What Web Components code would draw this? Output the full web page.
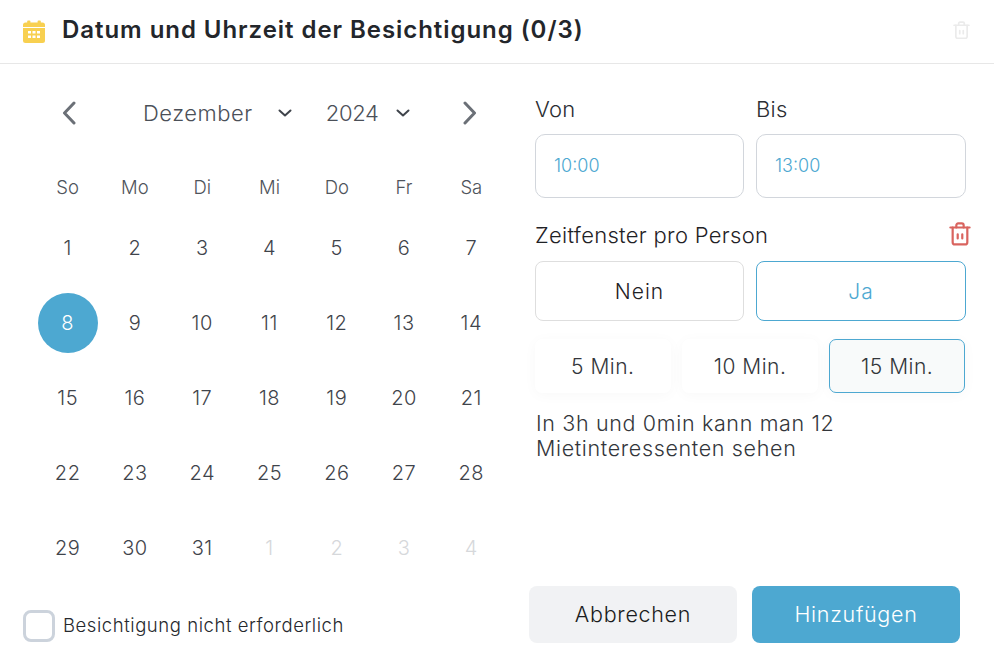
<!DOCTYPE html>
<html lang="de">
<head>
<meta charset="utf-8">
<title>Besichtigung</title>
<style>
  html, body { margin: 0; background: #fff; }
  body { font-family: "Inter", "Liberation Sans", sans-serif; }
</style>
</head>
<body>
<visit-dialog></visit-dialog>
<script>
const TRASH = `
  <svg viewBox="0 0 24 26" fill="none" stroke="currentColor" stroke-width="2.4" stroke-linecap="round" stroke-linejoin="round">
    <path d="M1.5 6h21"/>
    <path d="M8 6V3.5A2 2 0 0 1 10 1.5h4a2 2 0 0 1 2 2V6"/>
    <path d="M4 6v16a2.500 2.500 0 0 0 2.500 2.500h11A2.500 2.500 0 0 0 20 22V6"/>
    <path d="M9.500 13.500v4.500M14.500 13.500v4.500"/>
  </svg>`;

class DialogHeader extends HTMLElement {
  constructor() {
    super();
    this.attachShadow({ mode: 'open' });
  }

  connectedCallback() {
    this.shadowRoot.innerHTML = `
      <style>
        :host {
          display: flex;
          align-items: center;
          height: 63px;
          padding: 0 24px 0 23px;
          border-bottom: 1px solid #e7e7e7;
        }
        .cal { width: 22px; height: 23px; margin-right: 17px; display: block; }
        h1 {
          flex: 1;
          margin: -5px 0 0;
          font-size: 24px;
          font-weight: 600;
          letter-spacing: 0.95px;
          color: #23262b;
        }
        .trash { width: 17px; height: 21px; color: #ebebeb; display: block; }
      </style>
      <svg class="cal" viewBox="0 0 22 23">
        <path fill="#f8d050" d="M5 0.5h1.6a.8.8 0 0 1 .8.8V2.500h7.200V1.300a.8.8 0 0 1 .8-.8H17a.8.8 0 0 1 .8.8V2.500H19.500A2.500 2.500 0 0 1 22 5V7H0V5A2.500 2.500 0 0 1 2.500 2.500H4.200V1.300a.8.8 0 0 1 .8-.8Z"/>
        <path fill="#f8d050" d="M0 8H22V20.500A2.500 2.500 0 0 1 19.500 23H2.500A2.500 2.500 0 0 1 0 20.500Z"/>
        <g fill="#fff">
          <rect x="5" y="11" width="3" height="2.500"/><rect x="9.500" y="11" width="3" height="2.500"/><rect x="14" y="11" width="3" height="2.500"/>
          <rect x="5" y="15.500" width="3" height="2.500"/><rect x="9.500" y="15.500" width="3" height="2.500"/><rect x="14" y="15.500" width="3" height="2.500"/>
        </g>
      </svg>
      <h1><slot></slot></h1>
      <span class="trash">${TRASH}</span>
    `;
  }
}

class MonthCalendar extends HTMLElement {
  constructor() {
    super();
    this.attachShadow({ mode: 'open' });
  }

  connectedCallback() {
    const weekdays = ['So', 'Mo', 'Di', 'Mi', 'Do', 'Fr', 'Sa'];
    let cells = '';
    for (let day = 1; day <= 31; day++) {
      cells += `<div class="cell"><span class="${day === 8 ? 'day picked' : 'day'}">${day}</span></div>`;
    }
    for (let day = 1; day <= 4; day++) {
      cells += `<div class="cell"><span class="day muted">${day}</span></div>`;
    }

    this.shadowRoot.innerHTML = `
      <style>
        :host { display: block; width: 471px; font-weight: 300; color: #3f444b; }
        .nav {
          display: flex;
          align-items: center;
          height: 40px;
          margin-left: 28px;
          margin-bottom: 35px;
          color: #4b5058;
        }
        .arrow { width: 14px; height: 24px; display: block; color: #6b7077; }
        .month {
          margin-left: 67px;
          font-size: 22px;
          letter-spacing: 0.5px;
        }
        .year {
          margin-left: 34px;
          font-size: 22px;
          letter-spacing: -0.3px;
        }
        .chev { width: 14px; height: 8px; display: block; margin-left: 25px; color: #3f444b; }
        .chev.y { margin-left: 17px; }
        .arrow.next { margin-left: 53px; }
        .grid {
          display: grid;
          grid-template-columns: repeat(7, 1fr);
          grid-auto-rows: 75px;
          font-size: 20px;
          letter-spacing: 0.5px;
        }
        .head { grid-auto-rows: 37px; margin-bottom: 5px; font-size: 18.500px; letter-spacing: 0; color: #4f545b; }
        .head div { display: flex; align-items: center; justify-content: center; }
        .cell { display: flex; align-items: center; justify-content: center; }
        .day {
          width: 60px;
          height: 60px;
          border-radius: 50%;
          display: flex;
          align-items: center;
          justify-content: center;
        }
        .picked { background: #4da8d1; color: #fff; }
        .muted { color: #d6d8db; }
      </style>
      <div class="nav">
        <svg class="arrow" viewBox="0 0 14 24" fill="none" stroke="currentColor" stroke-width="3" stroke-linecap="round" stroke-linejoin="round"><path d="M12 2 2.500 12 12 22"/></svg>
        <span class="month">Dezember</span>
        <svg class="chev" viewBox="0 0 14 8" fill="none" stroke="currentColor" stroke-width="2" stroke-linecap="round" stroke-linejoin="round"><path d="M1.500 1.500 7 6.500l5.500-5"/></svg>
        <span class="year">2024</span>
        <svg class="chev y" viewBox="0 0 14 8" fill="none" stroke="currentColor" stroke-width="2" stroke-linecap="round" stroke-linejoin="round"><path d="M1.500 1.500 7 6.500l5.500-5"/></svg>
        <svg class="arrow next" viewBox="0 0 14 24" fill="none" stroke="currentColor" stroke-width="3" stroke-linecap="round" stroke-linejoin="round"><path d="M2 2l9.500 10L2 22"/></svg>
      </div>
      <div class="grid head">${weekdays.map((d) => `<div>${d}</div>`).join('')}</div>
      <div class="grid">${cells}</div>
    `;
  }
}

class TimeField extends HTMLElement {
  constructor() {
    super();
    this.attachShadow({ mode: 'open' });
  }

  connectedCallback() {
    this.shadowRoot.innerHTML = `
      <style>
        :host { display: block; }
        label { display: block; height: 38px; margin-top: -2px; font-size: 22px; font-weight: 300; color: #2b2e33; letter-spacing: 0.3px; }
        .box {
          box-sizing: border-box;
          height: 64px;
          border: 1px solid #d2d6dc;
          border-radius: 10px;
          padding: 0 0 2px 18px;
          display: flex;
          align-items: center;
          font-size: 18px;
          font-weight: 300;
          color: #4da8d1;
        }
      </style>
      <label>${this.getAttribute('label')}</label>
      <div class="box"><slot></slot></div>
    `;
  }
}

class ChoiceButton extends HTMLElement {
  constructor() {
    super();
    this.attachShadow({ mode: 'open' });
  }

  connectedCallback() {
    this.shadowRoot.innerHTML = `
      <style>
        :host {
          display: flex;
          box-sizing: border-box;
          align-items: center;
          justify-content: center;
          height: 60px;
          border: 1px solid #dedede;
          border-radius: 8px;
          font-size: 21px;
          font-weight: 300;
          letter-spacing: 1px;
          color: #1f2226;
        }
        :host([selected]) { border-color: #4da8d1; color: #4da8d1; }
      </style>
      <slot></slot>
    `;
  }
}

class SlotChip extends HTMLElement {
  constructor() {
    super();
    this.attachShadow({ mode: 'open' });
  }

  connectedCallback() {
    this.shadowRoot.innerHTML = `
      <style>
        :host {
          display: flex;
          flex: 1;
          box-sizing: border-box;
          align-items: center;
          justify-content: center;
          height: 54px;
          border: 1px solid transparent;
          border-radius: 7px;
          background: #fff;
          box-shadow: 0 2px 14px rgba(0, 0, 0, 0.03);
          font-size: 21px;
          font-weight: 300;
          letter-spacing: 0.5px;
          color: #33363b;
        }
        :host([selected]) { border-color: #4da8d1; background: #f8fafa; }
      </style>
      <slot></slot>
    `;
  }
}

class TimePanel extends HTMLElement {
  constructor() {
    super();
    this.attachShadow({ mode: 'open' });
  }

  connectedCallback() {
    this.shadowRoot.innerHTML = `
      <style>
        :host { display: block; width: 431px; padding-top: 5px; }
        .row { display: grid; grid-template-columns: 209px 1fr; gap: 12px; }
        .title {
          display: flex;
          align-items: center;
          justify-content: space-between;
          height: 27px;
          margin: 23px -5px 13px 0;
          font-size: 22px;
          font-weight: 300;
          letter-spacing: 0.3px;
          color: #1f2226;
        }
        .title span { width: 22px; height: 25px; color: #d9645f; display: block; }
        .chips { display: flex; margin-top: 18px; gap: 11.500px; width: 430px; }
        p {
          margin: 18px 0 0 1px;
          font-size: 21.500px;
          font-weight: 300;
          line-height: 25px;
          letter-spacing: 0.65px;
          color: #33363b;
        }
      </style>
      <div class="row">
        <time-field label="Von">10:00</time-field>
        <time-field label="Bis">13:00</time-field>
      </div>
      <div class="title">Zeitfenster pro Person <span>${TRASH}</span></div>
      <div class="row">
        <choice-button>Nein</choice-button>
        <choice-button selected>Ja</choice-button>
      </div>
      <div class="chips">
        <slot-chip>5 Min.</slot-chip>
        <slot-chip>10 Min.</slot-chip>
        <slot-chip selected>15 Min.</slot-chip>
      </div>
      <p>In 3h und 0min kann man 12<br>Mietinteressenten sehen</p>
    `;
  }
}

class DialogFooter extends HTMLElement {
  constructor() {
    super();
    this.attachShadow({ mode: 'open' });
  }

  connectedCallback() {
    this.shadowRoot.innerHTML = `
      <style>
        :host {
          display: flex;
          align-items: center;
          height: 57px;
          padding-left: 23px;
        }
        .check {
          box-sizing: border-box;
          width: 32px;
          height: 32px;
          margin-top: 22px;
          border: 3px solid #ccd3dc;
          border-radius: 8px;
        }
        .note {
          flex: 1;
          margin: 21px 0 0 8px;
          font-size: 18.500px;
          font-weight: 300;
          letter-spacing: 0.56px;
          color: #26292e;
        }
        button {
          box-sizing: border-box;
          width: 208px;
          height: 57px;
          border: 0;
          border-radius: 8px;
          padding: 0 0 2px;
          font: 300 21.500px "Inter", "Liberation Sans", sans-serif;
          letter-spacing: 0.7px;
        }
        .cancel { background: #f1f2f4; color: #1a1c20; margin-right: 15px; }
        .add { background: #4da8d1; color: #fff; margin-right: 34px; }
      </style>
      <span class="check"></span>
      <span class="note">Besichtigung nicht erforderlich</span>
      <button class="cancel">Abbrechen</button>
      <button class="add">Hinzufügen</button>
    `;
  }
}

class VisitDialog extends HTMLElement {
  constructor() {
    super();
    this.attachShadow({ mode: 'open' });
  }

  connectedCallback() {
    this.shadowRoot.innerHTML = `
      <style>
        :host {
          display: flex;
          flex-direction: column;
          width: 994px;
          height: 665px;
          overflow: hidden;
          background: #fff;
        }
        .body { display: flex; flex: 1; min-height: 0; padding: 29px 0 0 34px; gap: 30px; }
        dialog-footer { margin-bottom: 22px; }
      </style>
      <dialog-header>Datum und Uhrzeit der Besichtigung (0/3)</dialog-header>
      <div class="body">
        <month-calendar></month-calendar>
        <time-panel></time-panel>
      </div>
      <dialog-footer></dialog-footer>
    `;
  }
}

customElements.define('dialog-header', DialogHeader);
customElements.define('month-calendar', MonthCalendar);
customElements.define('time-field', TimeField);
customElements.define('choice-button', ChoiceButton);
customElements.define('slot-chip', SlotChip);
customElements.define('time-panel', TimePanel);
customElements.define('dialog-footer', DialogFooter);
customElements.define('visit-dialog', VisitDialog);
</script>
</body>
</html>
